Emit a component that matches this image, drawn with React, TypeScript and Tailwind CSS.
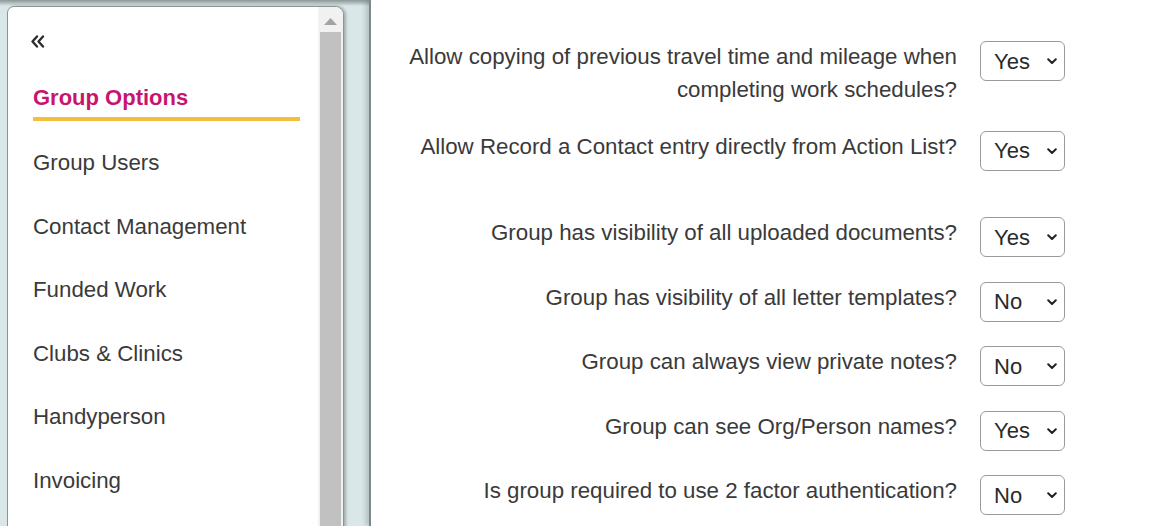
import React from "react";

const font = { fontFamily: '"Liberation Sans", Arial, Helvetica, sans-serif' };

const navItems = [
  "Group Users",
  "Contact Management",
  "Funded Work",
  "Clubs & Clinics",
  "Handyperson",
  "Invoicing",
];

type Row = { label: React.ReactNode; value: string; h: string };

function Select({ value }: { value: string }) {
  return (
    <div className="flex h-[40px] w-[85px] shrink-0 items-center justify-between rounded-[6px] border border-[#9a9a9a] bg-white pl-[13px] pr-[7px] text-[22px] text-[#2a2a2a]">
      <span>{value}</span>
      <svg width="10" height="7" viewBox="0 0 10 7" className="mb-[-1px]">
        <polyline points="1.2,1.2 5,5 8.8,1.2" fill="none" stroke="#222" strokeWidth="2" strokeLinecap="round" strokeLinejoin="round" />
      </svg>
    </div>
  );
}

export default function App() {
  const rows: Row[] = [
    {
      label: "Allow copying of previous travel time and mileage when completing work schedules?",
      value: "Yes",
      h: "h-[65px]",
    },
    { label: "Allow Record a Contact entry directly from Action List?", value: "Yes", h: "h-[62px]" },
    { label: "Group has visibility of all uploaded documents?", value: "Yes", h: "h-[40px]" },
    { label: "Group has visibility of all letter templates?", value: "No", h: "h-[40px]" },
    { label: "Group can always view private notes?", value: "No", h: "h-[40px]" },
    { label: "Group can see Org/Person names?", value: "Yes", h: "h-[40px]" },
    { label: "Is group required to use 2 factor authentication?", value: "No", h: "h-[40px]" },
  ];

  return (
    <div
      style={font}
      className="relative flex h-[526px] w-[1157px] overflow-hidden bg-[#d9e7e8]"
    >
      {/* top shadow strip */}
      <div className="pointer-events-none absolute left-0 top-0 h-[6px] w-[370px] bg-gradient-to-b from-[#8c9797] to-[#d9e7e8]" />

      {/* Left panel */}
      <div className="relative z-10 ml-[7px] mt-[6px] flex h-[540px] w-[337px] shrink-0 overflow-hidden rounded-tl-[7px] rounded-tr-[9px] border border-[#8b9696] bg-white shadow-[2px_0_3px_rgba(0,0,0,0.25)]">
        <div className="flex flex-1 flex-col pl-[25px] pt-[28px] text-[22.3px] text-[#3a3a3a]">
          <svg width="15" height="13" viewBox="0 0 15 13" className="ml-[-3px]">
            <polyline points="7,1.5 2.5,6.5 7,11.5" fill="none" stroke="#2e2e2e" strokeWidth="2.4" strokeLinecap="round" strokeLinejoin="round" />
            <polyline points="13,1.5 8.5,6.5 13,11.5" fill="none" stroke="#2e2e2e" strokeWidth="2.4" strokeLinecap="round" strokeLinejoin="round" />
          </svg>
          <div className="mt-[33px] text-[22px] font-bold leading-[33px] text-[#c8146f]">
            Group Options
          </div>
          <div className="mt-[3px] h-[4px] w-[267px] bg-[#f2c041]" />
          <div className="mt-[10px] flex flex-col">
            {navItems.map((n) => (
              <div key={n} className="flex h-[63.5px] items-center leading-[33px]">
                {n}
              </div>
            ))}
          </div>
        </div>
        {/* scrollbar */}
        <div className="flex w-[25px] shrink-0 flex-col bg-[#f1f1f1] px-[2px]">
          <div className="flex h-[25px] items-center justify-center pt-[3px]">
            <svg width="13" height="7" viewBox="0 0 13 7">
              <polygon points="0,7 6.5,0 13,7" fill="#a3a3a3" />
            </svg>
          </div>
          <div className="flex-1 bg-[#c1c1c1]" />
        </div>
      </div>

      {/* Right panel */}
      <div className="relative z-20 ml-[25px] flex flex-1 flex-col border-l-2 border-[#7d8989] bg-white pt-[41px] pl-[20px] pr-[92px] shadow-[-3px_0_5px_rgba(0,0,0,0.18)]">
        <div className="flex flex-col gap-[24.5px]">
          {rows.map((r, i) => (
            <div key={i} className={`flex items-start justify-end gap-[23px] ${r.h}`}>
              <div className="mt-[-1px] w-[560px] shrink-0 text-right text-[22.3px] leading-[33px] text-[#3a3a3a]">
                {r.label}
              </div>
              <Select value={r.value} />
            </div>
          ))}
        </div>
      </div>
    </div>
  );
}
